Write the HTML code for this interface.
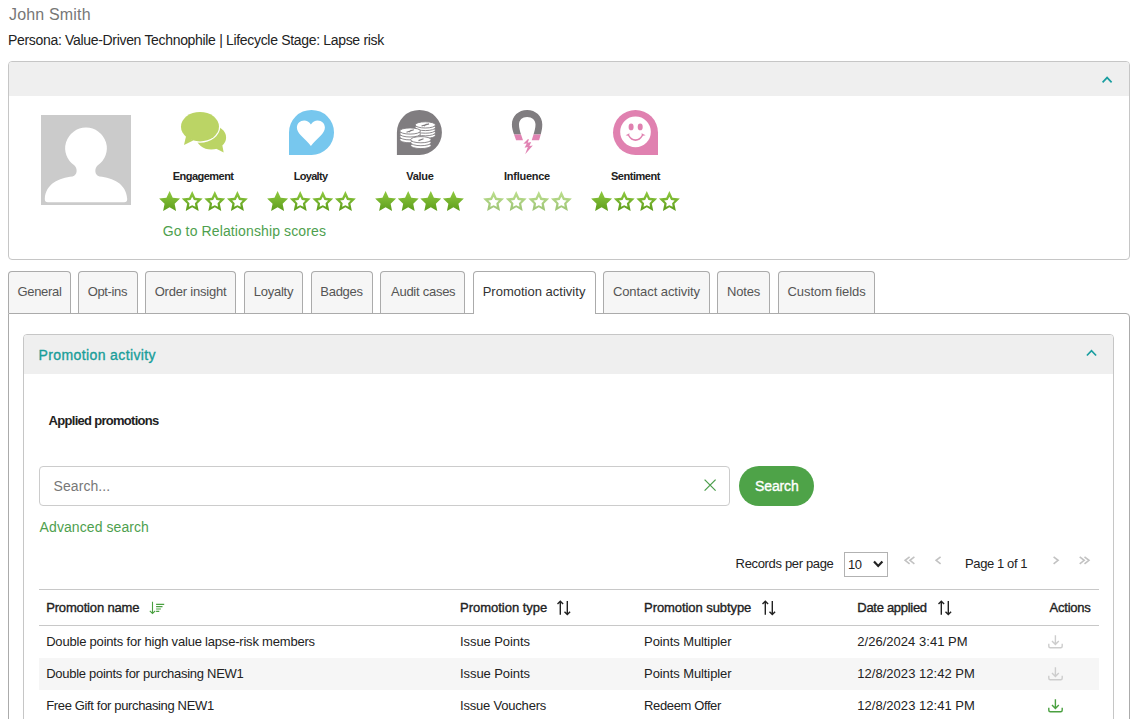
<!DOCTYPE html>
<html lang="en">
<head>
<meta charset="utf-8">
<title>John Smith - Promotion activity</title>
<style>
html,body{margin:0;padding:0;background:#fff}
body{width:1141px;height:719px;position:relative;overflow:hidden;font-family:"Liberation Sans",sans-serif;color:#222}
div,svg,span{position:absolute;box-sizing:border-box}
.t{white-space:pre;line-height:20px;height:20px}
.panel{border:1px solid #c6c6c6;border-radius:4px;background:#fff}
.hd{left:0;top:0;right:0;background:#efefef;border-radius:3px 3px 0 0}
.tab{top:271px;height:42px;border:1px solid #ababab;border-bottom:none;border-radius:4px 4px 0 0;background:#f6f6f6}
.tab.on{background:#fff;height:43px}
.row{left:39px;width:1060px;height:32px}
</style>
</head>
<body>
<div class="panel" style="left:8px;top:61px;width:1122px;height:199px"><div class="hd" style="height:34px"></div></div>
<svg style="left:1099px;top:72px" width="16" height="16" viewBox="0 0 16 16"><path d="M3.6,10.3 L8.1,5.6 L12.6,10.3" fill="none" stroke="#1a9ea0" stroke-width="1.7"/></svg>
<svg style="left:41px;top:115px" width="90" height="90" viewBox="0 0 90 90"><rect width="90" height="90" fill="#cbcbcb"/>
<path fill="#fff" d="M45,12.6 A20.7,20.7 0 0 1 56.5,50.6 C53.5,53.2 53.2,60.3 58.5,61.6 C72,63.2 85.2,68.5 86.2,84 Q86.2,87.2 83.2,87.2 L6.8,87.2 Q3.8,87.2 3.8,84 C4.8,68.5 18,63.2 31.5,61.6 C36.8,60.3 36.5,53.2 33.5,50.6 A20.7,20.7 0 0 1 45,12.6Z"/></svg>
<svg style="left:175px;top:105px" width="56" height="52" viewBox="175 105 56 52">
<path fill="#bbd465" d="M222.3,145.2 L223.7,152.5 L215.8,148.6 Z"/>
<ellipse cx="211.2" cy="137.6" rx="14.9" ry="12" fill="#bbd465"/>
<ellipse cx="200" cy="126.7" rx="20.2" ry="16" fill="#fff"/>
<path fill="#fff" d="M184.6,134.5 L182.6,146.6 L194,141.5 Z"/>
<ellipse cx="200" cy="126.7" rx="19" ry="14.8" fill="#bbd465"/>
<path fill="#bbd465" d="M186.2,135.5 L184,144.9 L193.2,140.6 Z"/>
</svg>
<svg style="left:284px;top:105px" width="56" height="52" viewBox="284 105 56 52">
<path fill="#77c7ee" d="M311.5,109.9 A22.5,22.5 0 1 1 311.5,154.9 L289,154.9 L289,132.4 A22.5,22.5 0 0 1 311.5,109.9Z"/>
<path fill="#fff" d="M310.9,124.5 C309.3,121.6 306.6,120.5 304.2,120.5 C300.1,120.5 296.9,123.6 296.9,127.6 C296.9,131 298.8,133.2 301,135.4 C304.8,139.2 308,142 310.9,146 C313.8,142 317,139.2 320.8,135.4 C323,133.2 324.9,131 324.9,127.6 C324.9,123.6 321.7,120.5 317.6,120.5 C315.2,120.5 312.5,121.6 310.9,124.5Z"/>
</svg>
<svg style="left:392px;top:105px" width="56" height="52" viewBox="392 105 56 52">
<path fill="#807d80" d="M419.4,109.9 A22.5,22.5 0 1 1 419.4,154.9 L396.9,154.9 L396.9,132.4 A22.5,22.5 0 0 1 419.4,109.9Z"/>
<g fill="#fff" stroke="#807d80" stroke-width="0.9">
<ellipse cx="425.3" cy="135.3" rx="10.2" ry="3.1"/><ellipse cx="425.3" cy="132.7" rx="10.2" ry="3.1"/><ellipse cx="425.3" cy="130.1" rx="10.2" ry="3.1"/><ellipse cx="425.3" cy="127.5" rx="10.2" ry="3.1"/><ellipse cx="425.3" cy="124.9" rx="10.2" ry="3.1"/>
<ellipse cx="410.1" cy="139.7" rx="10.4" ry="3.1"/><ellipse cx="410.1" cy="136.8" rx="10.4" ry="3.1"/><ellipse cx="410.1" cy="133.9" rx="10.4" ry="3.1"/><ellipse cx="410.1" cy="131" rx="10.4" ry="3.1"/>
<ellipse cx="420.9" cy="145.5" rx="10.2" ry="3.1"/><ellipse cx="420.9" cy="142.6" rx="10.2" ry="3.1"/><ellipse cx="420.9" cy="139.7" rx="10.2" ry="3.1"/>
</g>
<g fill="none" stroke="#807d80" stroke-width="1.2"><path d="M421.5,126 L429,123.8 M424,125.9 L426.6,123.9"/><path d="M406.5,132.2 L413.8,129.8 M409,132 L411.5,130"/><path d="M418.5,140.6 L423.5,138.8"/></g>
</svg>
<svg style="left:500px;top:105px" width="56" height="52" viewBox="500 105 56 52">
<defs><clipPath id="mg1"><rect x="500" y="105" width="56" height="29.5"/></clipPath><clipPath id="mg2"><rect x="500" y="134.5" width="56" height="10"/></clipPath></defs>
<path id="mag" clip-path="url(#mg1)" fill="#807d80" d="M516.1,140.3 C514,134 511.9,130 511.9,124.5 C511.9,116 518.5,109.9 527.1,109.9 C535.7,109.9 542.3,116 542.3,124.5 C542.3,130 540.8,134 539.1,140.3 L531.7,140.3 C533.5,134.5 535.5,129 535.5,124.5 C535.5,120 532,116.9 527.1,116.9 C522.2,116.9 519,120 519,124.5 C519,129 521,134.5 523,140.3 Z"/>
<path clip-path="url(#mg2)" fill="#e183b3" d="M516.1,140.3 C514,134 511.9,130 511.9,124.5 C511.9,116 518.5,109.9 527.1,109.9 C535.7,109.9 542.3,116 542.3,124.5 C542.3,130 540.8,134 539.1,140.3 L531.7,140.3 C533.5,134.5 535.5,129 535.5,124.5 C535.5,120 532,116.9 527.1,116.9 C522.2,116.9 519,120 519,124.5 C519,129 521,134.5 523,140.3 Z"/>
<path fill="#e183b3" d="M528,139 L523.3,143.8 L526.8,143.5 L524.6,147.7 L527.8,147 L525.2,154.3 L532.8,145.4 L529.4,146 L531.2,142.1 L527.7,142.8 L528.9,139.6Z"/>
</svg>
<svg style="left:608px;top:105px" width="56" height="52" viewBox="608 105 56 52">
<path fill="#e081b0" d="M635.5,110 A22.5,22.5 0 0 1 658,132.5 L658,155 L635.5,155 A22.5,22.5 0 0 1 635.5,110Z"/>
<circle cx="635.5" cy="131.9" r="15.3" fill="#fff"/>
<ellipse cx="631.1" cy="126.9" rx="2.5" ry="3.4" fill="#e081b0"/><ellipse cx="640.2" cy="126.9" rx="2.5" ry="3.4" fill="#e081b0"/>
<path fill="#e081b0" d="M625.6,135.2 L629.5,133.2 L629.2,135 C631,138 633,139.2 635.5,139.2 C638,139.2 640,138 641.8,135 L641.5,133.2 L645.6,135.2 L643,135.8 C641,139.2 638.5,141 635.5,141 C632.5,141 630,139.2 628,135.8Z"/>
</svg>
<svg style="left:150px;top:186px" width="540" height="30" viewBox="150 186 540 30"><defs><linearGradient id="sg" x1="0" y1="0" x2="0" y2="1"><stop offset="0" stop-color="#90ca40"/><stop offset="1" stop-color="#5d9d1c"/></linearGradient></defs>
<path fill="url(#sg)" fill-rule="evenodd" d="M169.60,191.00 L172.72,197.71 L180.06,198.60 L174.64,203.64 L176.07,210.90 L169.60,207.30 L163.13,210.90 L164.56,203.64 L159.14,198.60 L166.48,197.71ZM192.20,191.00 L195.32,197.71 L202.66,198.60 L197.24,203.64 L198.67,210.90 L192.20,207.30 L185.73,210.90 L187.16,203.64 L181.74,198.60 L189.08,197.71ZM192.20,196.80 L193.88,199.99 L197.43,200.60 L194.91,203.18 L195.43,206.75 L192.20,205.15 L188.97,206.75 L189.49,203.18 L186.97,200.60 L190.52,199.99ZM214.80,191.00 L217.92,197.71 L225.26,198.60 L219.84,203.64 L221.27,210.90 L214.80,207.30 L208.33,210.90 L209.76,203.64 L204.34,198.60 L211.68,197.71ZM214.80,196.80 L216.48,199.99 L220.03,200.60 L217.51,203.18 L218.03,206.75 L214.80,205.15 L211.57,206.75 L212.09,203.18 L209.57,200.60 L213.12,199.99ZM237.40,191.00 L240.52,197.71 L247.86,198.60 L242.44,203.64 L243.87,210.90 L237.40,207.30 L230.93,210.90 L232.36,203.64 L226.94,198.60 L234.28,197.71ZM237.40,196.80 L239.08,199.99 L242.63,200.60 L240.11,203.18 L240.63,206.75 L237.40,205.15 L234.17,206.75 L234.69,203.18 L232.17,200.60 L235.72,199.99Z"/>
<path fill="url(#sg)" fill-rule="evenodd" d="M277.60,191.00 L280.72,197.71 L288.06,198.60 L282.64,203.64 L284.07,210.90 L277.60,207.30 L271.13,210.90 L272.56,203.64 L267.14,198.60 L274.48,197.71ZM300.20,191.00 L303.32,197.71 L310.66,198.60 L305.24,203.64 L306.67,210.90 L300.20,207.30 L293.73,210.90 L295.16,203.64 L289.74,198.60 L297.08,197.71ZM300.20,196.80 L301.88,199.99 L305.43,200.60 L302.91,203.18 L303.43,206.75 L300.20,205.15 L296.97,206.75 L297.49,203.18 L294.97,200.60 L298.52,199.99ZM322.80,191.00 L325.92,197.71 L333.26,198.60 L327.84,203.64 L329.27,210.90 L322.80,207.30 L316.33,210.90 L317.76,203.64 L312.34,198.60 L319.68,197.71ZM322.80,196.80 L324.48,199.99 L328.03,200.60 L325.51,203.18 L326.03,206.75 L322.80,205.15 L319.57,206.75 L320.09,203.18 L317.57,200.60 L321.12,199.99ZM345.40,191.00 L348.52,197.71 L355.86,198.60 L350.44,203.64 L351.87,210.90 L345.40,207.30 L338.93,210.90 L340.36,203.64 L334.94,198.60 L342.28,197.71ZM345.40,196.80 L347.08,199.99 L350.63,200.60 L348.11,203.18 L348.63,206.75 L345.40,205.15 L342.17,206.75 L342.69,203.18 L340.17,200.60 L343.72,199.99Z"/>
<path fill="url(#sg)" fill-rule="evenodd" d="M385.60,191.00 L388.72,197.71 L396.06,198.60 L390.64,203.64 L392.07,210.90 L385.60,207.30 L379.13,210.90 L380.56,203.64 L375.14,198.60 L382.48,197.71ZM408.20,191.00 L411.32,197.71 L418.66,198.60 L413.24,203.64 L414.67,210.90 L408.20,207.30 L401.73,210.90 L403.16,203.64 L397.74,198.60 L405.08,197.71ZM430.80,191.00 L433.92,197.71 L441.26,198.60 L435.84,203.64 L437.27,210.90 L430.80,207.30 L424.33,210.90 L425.76,203.64 L420.34,198.60 L427.68,197.71ZM453.40,191.00 L456.52,197.71 L463.86,198.60 L458.44,203.64 L459.87,210.90 L453.40,207.30 L446.93,210.90 L448.36,203.64 L442.94,198.60 L450.28,197.71Z"/>
<path fill="url(#sg)" fill-rule="evenodd" opacity="0.6" d="M493.60,191.00 L496.72,197.71 L504.06,198.60 L498.64,203.64 L500.07,210.90 L493.60,207.30 L487.13,210.90 L488.56,203.64 L483.14,198.60 L490.48,197.71ZM493.60,196.80 L495.28,199.99 L498.83,200.60 L496.31,203.18 L496.83,206.75 L493.60,205.15 L490.37,206.75 L490.89,203.18 L488.37,200.60 L491.92,199.99ZM516.20,191.00 L519.32,197.71 L526.66,198.60 L521.24,203.64 L522.67,210.90 L516.20,207.30 L509.73,210.90 L511.16,203.64 L505.74,198.60 L513.08,197.71ZM516.20,196.80 L517.88,199.99 L521.43,200.60 L518.91,203.18 L519.43,206.75 L516.20,205.15 L512.97,206.75 L513.49,203.18 L510.97,200.60 L514.52,199.99ZM538.80,191.00 L541.92,197.71 L549.26,198.60 L543.84,203.64 L545.27,210.90 L538.80,207.30 L532.33,210.90 L533.76,203.64 L528.34,198.60 L535.68,197.71ZM538.80,196.80 L540.48,199.99 L544.03,200.60 L541.51,203.18 L542.03,206.75 L538.80,205.15 L535.57,206.75 L536.09,203.18 L533.57,200.60 L537.12,199.99ZM561.40,191.00 L564.52,197.71 L571.86,198.60 L566.44,203.64 L567.87,210.90 L561.40,207.30 L554.93,210.90 L556.36,203.64 L550.94,198.60 L558.28,197.71ZM561.40,196.80 L563.08,199.99 L566.63,200.60 L564.11,203.18 L564.63,206.75 L561.40,205.15 L558.17,206.75 L558.69,203.18 L556.17,200.60 L559.72,199.99Z"/>
<path fill="url(#sg)" fill-rule="evenodd" d="M601.60,191.00 L604.72,197.71 L612.06,198.60 L606.64,203.64 L608.07,210.90 L601.60,207.30 L595.13,210.90 L596.56,203.64 L591.14,198.60 L598.48,197.71ZM624.20,191.00 L627.32,197.71 L634.66,198.60 L629.24,203.64 L630.67,210.90 L624.20,207.30 L617.73,210.90 L619.16,203.64 L613.74,198.60 L621.08,197.71ZM624.20,196.80 L625.88,199.99 L629.43,200.60 L626.91,203.18 L627.43,206.75 L624.20,205.15 L620.97,206.75 L621.49,203.18 L618.97,200.60 L622.52,199.99ZM646.80,191.00 L649.92,197.71 L657.26,198.60 L651.84,203.64 L653.27,210.90 L646.80,207.30 L640.33,210.90 L641.76,203.64 L636.34,198.60 L643.68,197.71ZM646.80,196.80 L648.48,199.99 L652.03,200.60 L649.51,203.18 L650.03,206.75 L646.80,205.15 L643.57,206.75 L644.09,203.18 L641.57,200.60 L645.12,199.99ZM669.40,191.00 L672.52,197.71 L679.86,198.60 L674.44,203.64 L675.87,210.90 L669.40,207.30 L662.93,210.90 L664.36,203.64 L658.94,198.60 L666.28,197.71ZM669.40,196.80 L671.08,199.99 L674.63,200.60 L672.11,203.18 L672.63,206.75 L669.40,205.15 L666.17,206.75 L666.69,203.18 L664.17,200.60 L667.72,199.99Z"/>
</svg>
<div style="left:8px;top:313px;width:1122px;height:420px;border:1px solid #ababab;border-radius:0 4px 0 0;background:#fff"></div>
<div class="tab" style="left:8px;width:63px"></div>
<div class="tab" style="left:78px;width:60px"></div>
<div class="tab" style="left:145px;width:91px"></div>
<div class="tab" style="left:244px;width:59px"></div>
<div class="tab" style="left:311px;width:62px"></div>
<div class="tab" style="left:380px;width:85px"></div>
<div class="tab on" style="left:473px;width:123px"></div>
<div class="tab" style="left:603px;width:107px"></div>
<div class="tab" style="left:717px;width:53px"></div>
<div class="tab" style="left:778px;width:97px"></div>
<div class="panel" style="left:23px;top:334px;width:1091px;height:400px"><div class="hd" style="height:39px"></div></div>
<svg style="left:1083px;top:345px" width="16" height="16" viewBox="0 0 16 16"><path d="M3.9,10.5 L8.5,5.7 L13.1,10.5" fill="none" stroke="#1a9ea0" stroke-width="1.7"/></svg>
<div style="left:39px;top:466px;width:691px;height:40px;border:1px solid #ccc;border-radius:4px;background:#fff"></div>
<svg style="left:702px;top:477px" width="16" height="16" viewBox="0 0 16 16"><path d="M2.6,2.6 L13.6,13.6 M13.6,2.6 L2.6,13.6" fill="none" stroke="#4e9f4e" stroke-width="1.3"/></svg>
<div style="left:739px;top:466px;width:75px;height:40px;border-radius:20px;background:#4ea348"></div>
<div style="left:844px;top:552px;width:44px;height:25px;border:1px solid #b2b2b2;background:#fff"></div>
<svg style="left:870px;top:556px" width="16" height="16" viewBox="0 0 16 16"><path d="M4,5.6 L8.2,10 L12.4,5.6" fill="none" stroke="#222" stroke-width="2.2"/></svg>
<svg style="left:895px;top:550px" width="200" height="20" viewBox="895 550 200 20"><path d="M909.6,556.8 L905.1,560.35 L909.6,563.9 M914.4,556.8 L909.9,560.35 L914.4,563.9 M940.6,556.8 L936.1,560.35 L940.6,563.9 M1053.6000000000001,556.8 L1058.1000000000001,560.35 L1053.6000000000001,563.9 M1079.7,556.8 L1084.2,560.35 L1079.7,563.9 M1084.5,556.8 L1089.0,560.35 L1084.5,563.9" fill="none" stroke="#c2c2c2" stroke-width="1.6"/></svg>
<div style="left:39px;top:589px;width:1060px;height:1px;background:#c8c8c8"></div>
<div style="left:39px;top:625px;width:1060px;height:1px;background:#c8c8c8"></div>
<div class="row" style="top:658px;background:#f6f6f6"></div>
<svg style="left:145px;top:598px" width="24" height="20" viewBox="145 598 24 20"><path d="M152.5,601.7 V613.2 M149.8,610.8 L152.5,613.5 L155.2,610.8 M156.1,604.4 H164.2 M156.1,606.6 H162.5 M156.1,609 H160.9 M156.1,611.4 H159.3" fill="none" stroke="#4aa040" stroke-width="1.1"/></svg>
<svg style="left:555.2px;top:598px" width="20" height="20" viewBox="555.2 598 20 20"><path d="M560.5,614.8 V601.5 M557.7,604.1 L560.5,601.3 L563.3,604.1 M567.5,601 V614.3 M564.7,611.7 L567.5,614.5 L570.3,611.7" fill="none" stroke="#222" stroke-width="1.4"/></svg>
<svg style="left:759.9px;top:598px" width="20" height="20" viewBox="759.9 598 20 20"><path d="M765.2,614.8 V601.5 M762.4,604.1 L765.2,601.3 L768.0,604.1 M772.2,601 V614.3 M769.4,611.7 L772.2,614.5 L775.0,611.7" fill="none" stroke="#222" stroke-width="1.4"/></svg>
<svg style="left:936.0px;top:598px" width="20" height="20" viewBox="936.0 598 20 20"><path d="M941.3,614.8 V601.5 M938.5,604.1 L941.3,601.3 L944.1,604.1 M948.3,601 V614.3 M945.5,611.7 L948.3,614.5 L951.1,611.7" fill="none" stroke="#222" stroke-width="1.4"/></svg>
<svg style="left:1046px;top:632px" width="20" height="20" viewBox="1046 632 20 20"><path d="M1055.4,635.3 V644.3 M1052,641 L1055.4,644.5 L1058.8,641 M1048.8,643.8 V646.3 Q1048.8,647.8 1050.3,647.8 H1060.7 Q1062.2,647.8 1062.2,646.3 V643.8" fill="none" stroke="#cdcdcd" stroke-width="1.4"/></svg>
<svg style="left:1046px;top:664px" width="20" height="20" viewBox="1046 632 20 20"><path d="M1055.4,635.3 V644.3 M1052,641 L1055.4,644.5 L1058.8,641 M1048.8,643.8 V646.3 Q1048.8,647.8 1050.3,647.8 H1060.7 Q1062.2,647.8 1062.2,646.3 V643.8" fill="none" stroke="#cdcdcd" stroke-width="1.4"/></svg>
<svg style="left:1046px;top:696px" width="20" height="20" viewBox="1046 632 20 20"><path d="M1055.4,635.3 V644.3 M1052,641 L1055.4,644.5 L1058.8,641 M1048.8,643.8 V646.3 Q1048.8,647.8 1050.3,647.8 H1060.7 Q1062.2,647.8 1062.2,646.3 V643.8" fill="none" stroke="#4aa040" stroke-width="1.4"/></svg>
<div class="t" style="left:9.00px;top:5px;font-size:16px;color:#777;letter-spacing:0.167px">John Smith</div>
<div class="t" style="left:8.00px;top:30px;font-size:14px;color:#222;letter-spacing:-0.321px">Persona: Value-Driven Technophile | Lifecycle Stage: Lapse risk</div>
<div class="t" style="left:172.70px;top:166px;font-size:11px;color:#222;letter-spacing:-0.522px;font-weight:700">Engagement</div>
<div class="t" style="left:293.80px;top:166px;font-size:11px;color:#222;letter-spacing:-0.717px;font-weight:700">Loyalty</div>
<div class="t" style="left:406.20px;top:166px;font-size:11px;color:#222;letter-spacing:-0.275px;font-weight:700">Value</div>
<div class="t" style="left:504.10px;top:166px;font-size:11px;color:#222;letter-spacing:-0.275px;font-weight:700">Influence</div>
<div class="t" style="left:610.90px;top:166px;font-size:11px;color:#222;letter-spacing:-0.462px;font-weight:700">Sentiment</div>
<div class="t" style="left:162.70px;top:221px;font-size:14px;color:#4e9f4e;letter-spacing:0.121px">Go to Relationship scores</div>
<div class="t" style="left:17.50px;top:282px;font-size:13px;color:#555;letter-spacing:-0.317px">General</div>
<div class="t" style="left:87.70px;top:282px;font-size:13px;color:#555;letter-spacing:-0.350px">Opt-ins</div>
<div class="t" style="left:154.70px;top:282px;font-size:13px;color:#555;letter-spacing:-0.208px">Order insight</div>
<div class="t" style="left:253.80px;top:282px;font-size:13px;color:#555;letter-spacing:-0.267px">Loyalty</div>
<div class="t" style="left:320.30px;top:282px;font-size:13px;color:#555;letter-spacing:-0.280px">Badges</div>
<div class="t" style="left:391.00px;top:282px;font-size:13px;color:#555;letter-spacing:-0.260px">Audit cases</div>
<div class="t" style="left:482.70px;top:282px;font-size:13px;color:#333;letter-spacing:0.006px">Promotion activity</div>
<div class="t" style="left:612.90px;top:282px;font-size:13px;color:#555;letter-spacing:-0.067px">Contact activity</div>
<div class="t" style="left:726.90px;top:282px;font-size:13px;color:#555;letter-spacing:-0.150px">Notes</div>
<div class="t" style="left:787.40px;top:282px;font-size:13px;color:#555;letter-spacing:-0.033px">Custom fields</div>
<div class="t" style="left:38.60px;top:345px;font-size:14px;color:#1a9e9a;letter-spacing:0.382px;-webkit-text-stroke:0.35px #1a9e9a">Promotion activity</div>
<div class="t" style="left:48.60px;top:411px;font-size:13px;color:#222;letter-spacing:-0.712px;font-weight:700">Applied promotions</div>
<div class="t" style="left:53.60px;top:476px;font-size:14px;color:#777;letter-spacing:0.062px">Search...</div>
<div class="t" style="left:39.60px;top:517px;font-size:14px;color:#4e9f4e;letter-spacing:0.079px">Advanced search</div>
<div class="t" style="left:755.10px;top:476px;font-size:14px;color:#fff;letter-spacing:-0.140px;-webkit-text-stroke:0.35px #fff">Search</div>
<div class="t" style="left:735.60px;top:554px;font-size:13px;color:#222;letter-spacing:-0.340px">Records per page</div>
<div class="t" style="left:848.00px;top:555px;font-size:13px;color:#222;letter-spacing:-0.500px">10</div>
<div class="t" style="left:965.10px;top:554px;font-size:13px;color:#222;letter-spacing:-0.400px">Page 1 of 1</div>
<div class="t" style="left:46.20px;top:598px;font-size:13px;color:#222;letter-spacing:-0.162px;-webkit-text-stroke:0.35px #222">Promotion name</div>
<div class="t" style="left:460.10px;top:598px;font-size:13px;color:#222;letter-spacing:-0.023px;-webkit-text-stroke:0.35px #222">Promotion type</div>
<div class="t" style="left:644.10px;top:598px;font-size:13px;color:#222;letter-spacing:-0.075px;-webkit-text-stroke:0.35px #222">Promotion subtype</div>
<div class="t" style="left:857.30px;top:598px;font-size:13px;color:#222;letter-spacing:-0.291px;-webkit-text-stroke:0.35px #222">Date applied</div>
<div class="t" style="left:1049.60px;top:598px;font-size:13px;color:#222;letter-spacing:-0.250px;-webkit-text-stroke:0.35px #222">Actions</div>
<div class="t" style="left:46.20px;top:632px;font-size:13px;color:#222;letter-spacing:-0.202px">Double points for high value lapse-risk members</div>
<div class="t" style="left:460.10px;top:632px;font-size:13px;color:#222;letter-spacing:-0.091px">Issue Points</div>
<div class="t" style="left:644.10px;top:632px;font-size:13px;color:#222;letter-spacing:-0.093px">Points Multipler</div>
<div class="t" style="left:857.30px;top:632px;font-size:13px;color:#222;letter-spacing:0.025px">2/26/2024 3:41 PM</div>
<div class="t" style="left:46.20px;top:664px;font-size:13px;color:#222;letter-spacing:-0.284px">Double points for purchasing NEW1</div>
<div class="t" style="left:460.10px;top:664px;font-size:13px;color:#222;letter-spacing:-0.091px">Issue Points</div>
<div class="t" style="left:644.10px;top:664px;font-size:13px;color:#222;letter-spacing:-0.093px">Points Multipler</div>
<div class="t" style="left:857.30px;top:664px;font-size:13px;color:#222;letter-spacing:0.029px">12/8/2023 12:42 PM</div>
<div class="t" style="left:46.20px;top:696px;font-size:13px;color:#222;letter-spacing:-0.350px">Free Gift for purchasing NEW1</div>
<div class="t" style="left:460.10px;top:696px;font-size:13px;color:#222;letter-spacing:-0.208px">Issue Vouchers</div>
<div class="t" style="left:644.10px;top:696px;font-size:13px;color:#222;letter-spacing:-0.382px">Redeem Offer</div>
<div class="t" style="left:857.30px;top:696px;font-size:13px;color:#222;letter-spacing:0.029px">12/8/2023 12:41 PM</div>
</body>
</html>
